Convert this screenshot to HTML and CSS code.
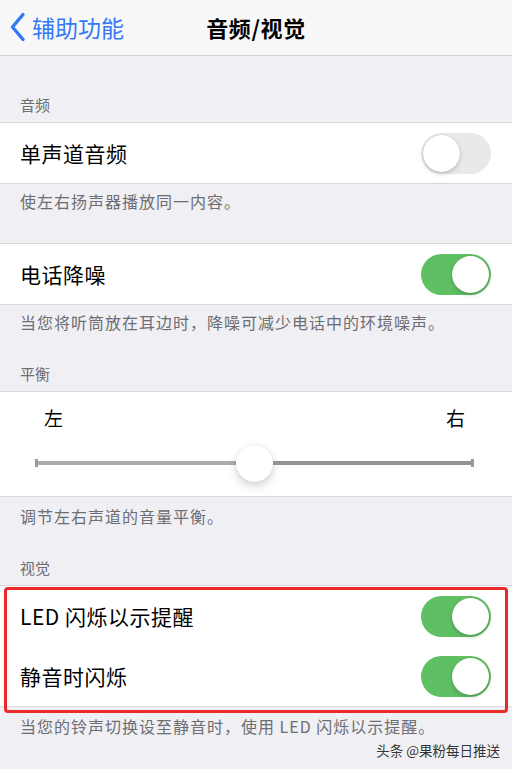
FILE: index.html
```html
<!DOCTYPE html>
<html lang="zh-CN">
    <head>
        <meta charset="UTF-8" />
        <title>音频/视觉</title>
        <link rel="stylesheet" href="styles.css">
    </head>
    <body>
        <!-- 상단 내비 -->
        <div class="nav">
            <div class="back">
                <svg class="chev" width="17" height="30" viewBox="0 0 17 30">
                    <path d="M14 2.5 L3.5 15 L14 27.5" fill="none" stroke="#3478f6" stroke-width="3.4" stroke-linecap="round" stroke-linejoin="round"/>
                </svg>
                <span>辅助功能</span>
            </div>
            <div class="title">音频/视觉</div>
        </div>

        <div class="hdr first">音频</div>
        <div class="group">
            <div class="row">
                <span class="label">单声道音频</span>
                <span class="sw"><i></i></span>
            </div>
        </div>
        <div class="foot">使左右扬声器播放同一内容。</div>

        <div class="group">
            <div class="row">
                <span class="label">电话降噪</span>
                <span class="sw on"><i></i></span>
            </div>
        </div>
        <div class="foot">当您将听筒放在耳边时，降噪可减少电话中的环境噪声。</div>

        <div class="hdr">平衡</div>
        <div class="group slide">
            <div class="lr">
                <span>左</span>
                <span>右</span>
            </div>
            <div class="track">
                <span class="tick"></span>
                <span class="bar lt"></span>
                <span class="thumb"></span>
                <span class="bar rt"></span>
                <span class="tick"></span>
            </div>
        </div>
        <div class="foot">调节左右声道的音量平衡。</div>

        <div class="hdr">视觉</div>
        <div class="group mark">
            <div class="row">
                <span class="label">LED 闪烁以示提醒</span>
                <span class="sw on"><i></i></span>
            </div>
            <div class="row">
                <span class="label">静音时闪烁</span>
                <span class="sw on"><i></i></span>
            </div>
            <!-- 빨간 강조 박스 -->
            <div class="redbox"></div>
        </div>
        <div class="foot">当您的铃声切换设至静音时，使用 LED 闪烁以示提醒。</div>

        <div class="wm">头条 @果粉每日推送</div>
    </body>
</html>
```
FILE: styles.css
```css
body {
    margin: 0;
    width: 512px;
    height: 769px;
    overflow: hidden;
    background-color: #efeff4;
    font-family: "Noto Sans CJK SC", "Noto Sans", sans-serif;
    color: #000;
}

/* 내비 */
.nav {
    position: relative;
    height: 55px;
    background-color: #f8f8f9;
    border-bottom: 1px solid #d6d6da;
    display: flex;
    align-items: center;
    justify-content: center;
}
.back {
    position: absolute;
    left: 9px;
    top: 0;
    height: 53px;
    display: flex;
    align-items: center;
    gap: 6px;
    color: #3478f6;
    font-size: 23px;
}
.chev {
    display: block;
}
.title {
    margin-bottom: 2px;
    font-size: 22px;
    font-weight: bold;
    letter-spacing: 0.6px;
}

/* 섹션 머리글 */
.hdr {
    padding: 0 20px 7px;
    font-size: 15px;
    line-height: 20px;
    color: #6d6d72;
}
.hdr.first {
    padding-top: 39px;
}

/* 흰 그룹 */
.group {
    position: relative;
    background-color: #fff;
    border-top: 1px solid #d9d9dd;
    border-bottom: 1px solid #d9d9dd;
}
.row {
    height: 60px;
    display: flex;
    align-items: center;
    justify-content: space-between;
    padding: 0 21px 0 20px;
}
.row + .row {
    box-shadow: inset 20px 1px 0 #fff, inset 0 1px 0 #dcdce0;
}
.label {
    font-size: 21px;
    letter-spacing: 0.5px;
}

/* 토글 */
.sw {
    width: 70px;
    height: 41px;
    border-radius: 21px;
    background-color: #e9e9eb;
    box-sizing: border-box;
    padding: 2px;
    display: flex;
}
.sw i {
    width: 37px;
    height: 37px;
    border-radius: 50%;
    background-color: #fff;
    box-shadow: 0 2px 4px rgba(0, 0, 0, 0.18), 0 0 1px rgba(0, 0, 0, 0.2);
}
.sw.on {
    background-color: #5fbf63;
    justify-content: flex-end;
}

/* 하단 설명 */
.foot {
    padding: 6px 20px 31px;
    font-size: 16px;
    line-height: 22px;
    color: #6d6d72;
    letter-spacing: 1px;
    white-space: nowrap;
}

/* 밸런스 슬라이더 */
.slide {
    height: 104px;
}
.lr {
    display: flex;
    justify-content: space-between;
    padding: 14px 47px 0 44px;
    font-size: 19px;
    line-height: 24px;
}
.track {
    display: flex;
    align-items: center;
    height: 40px;
    margin: 13px 38px 0 35px;
}
.tick {
    width: 3px;
    height: 8px;
    background-color: #9a9a9a;
}
.bar {
    flex: 1;
    height: 4px;
}
.bar.lt {
    background-color: #ababab;
}
.bar.rt {
    background-color: #939393;
}
.thumb {
    width: 37px;
    height: 37px;
    border-radius: 50%;
    background-color: #fff;
    box-shadow: 0 4px 10px rgba(0, 0, 0, 0.18), 0 0 1px rgba(0, 0, 0, 0.15);
}
.slide + .foot {
    padding-top: 8px;
}

/* 빨간 테두리 */
.redbox {
    position: absolute;
    top: 1px;
    left: 4px;
    right: 4px;
    bottom: -7px;
    border: 3px solid #ea2a2a;
    border-radius: 4px;
}
.mark + .foot {
    padding-top: 8px;
}

/* 워터마크 */
.wm {
    position: absolute;
    right: 12px;
    top: 740px;
    font-size: 13.5px;
    line-height: 20px;
    color: #333;
    text-shadow: 0 0 2px #fff;
}
```
